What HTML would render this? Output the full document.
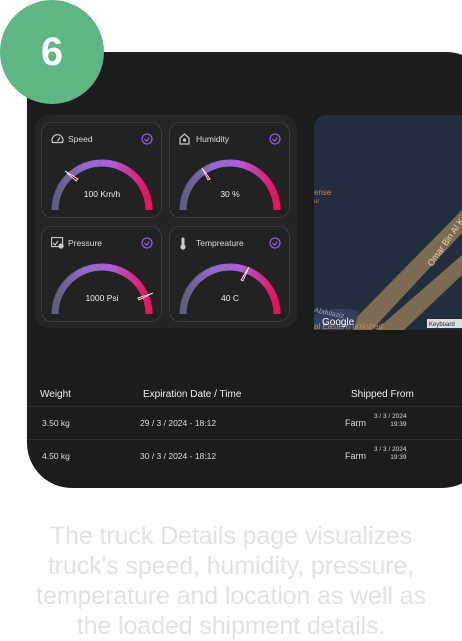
<!DOCTYPE html>
<html><head><style>
*{margin:0;padding:0;box-sizing:border-box}
body{width:462px;height:641px;background:#fff;position:relative;overflow:hidden;font-family:"Liberation Sans",sans-serif}
.panel{position:absolute;left:27px;top:52px;width:460px;height:436px;background:#1c1c1c;border-radius:0 40px 45px 45px}
.circle{position:absolute;left:0;top:0;width:104px;height:104px;border-radius:50%;background:#5db683;color:#fafafa;font-size:40px;font-weight:bold;text-align:center;line-height:104px}
.gp{position:absolute;left:35px;top:115px;width:262px;height:213px;background:#252525;border-radius:14px}
.card{position:absolute;width:121px;height:96px;border:1px solid #3c3c3c;border-radius:11px;background:#222}
.card .t{position:absolute;left:26px;top:11px;font-size:8.5px;color:#ddd}
.card .ic{position:absolute;left:9px;top:10px}
.card .ck{position:absolute;right:8px;top:10px}
.card svg.g{position:absolute;left:0;top:0}
.map{position:absolute;left:314px;top:115px;width:148px;height:215px;background:#222d3d;border-radius:12px 0 0 0;overflow:hidden}
.th{position:absolute;top:389px;font-size:10px;color:#eee}
.td{position:absolute;font-size:8.5px;color:#ddd}
.line{position:absolute;left:27px;width:435px;height:1px;background:#2c2c2c}
.cap{position:absolute;left:-20px;top:521px;width:502px;text-align:center;color:#e2e2e2;font-size:25px;line-height:30px;letter-spacing:-0.1px}
</style></head><body>
<div class="panel"></div>
<div class="circle">6</div>
<div class="gp"></div>
<svg width="0" height="0" style="position:absolute"><defs><linearGradient id="gr" x1="0" y1="0" x2="1" y2="0"><stop offset="0" stop-color="#5e5e80"/><stop offset="0.3" stop-color="#8d6acb"/><stop offset="0.6" stop-color="#ab5ed8"/><stop offset="1" stop-color="#ec0f5c"/></linearGradient></defs></svg>

<div class="card" style="left:41px;top:122px"><svg class="ic" width="13" height="11" viewBox="0 0 13 11"><path d="M1.5 9.5A5.5 5.5 0 1 1 11.5 9.5Z" fill="none" stroke="#ccc" stroke-width="1.2"/><path d="M6.5 8L9 4.5" stroke="#ccc" stroke-width="1.2"/></svg><div class="t">Speed</div><svg class="ck" width="12" height="12"><circle cx="6" cy="6" r="5" fill="none" stroke="#8b5cf6" stroke-width="1.3"/><path d="M3.5 6l2 2 3-3.5" fill="none" stroke="#8b5cf6" stroke-width="1.3"/></svg>
<svg class="g" width="121" height="96"><path d="M13 87A47 47 0 0 1 107 87" fill="none" stroke="url(#gr)" stroke-width="7"/><path d="M23 48L36 56L34 58Z" fill="#e00" stroke="#fff" stroke-width="0.8"/><text x="60" y="74" font-size="8.5" fill="#eee" text-anchor="middle">100 Km/h</text></svg></div>

<div class="card" style="left:169px;top:122px"><svg class="ic" width="11" height="12" viewBox="0 0 11 12"><path d="M1 5L5.5 1L10 5V11H1Z" fill="none" stroke="#ccc" stroke-width="1.2"/><circle cx="5.5" cy="7" r="1.6" fill="#ccc"/></svg><div class="t">Humidity</div><svg class="ck" width="12" height="12"><circle cx="6" cy="6" r="5" fill="none" stroke="#8b5cf6" stroke-width="1.3"/><path d="M3.5 6l2 2 3-3.5" fill="none" stroke="#8b5cf6" stroke-width="1.3"/></svg>
<svg class="g" width="121" height="96"><path d="M13 87A47 47 0 0 1 107 87" fill="none" stroke="url(#gr)" stroke-width="7"/><path d="M32 45L40 56L38 57Z" fill="#e00" stroke="#fff" stroke-width="0.8"/><text x="60" y="74" font-size="8.5" fill="#eee" text-anchor="middle">30 %</text></svg></div>

<div class="card" style="left:41px;top:226px"><svg class="ic" width="13" height="12" viewBox="0 0 13 12"><rect x="0.6" y="0.6" width="11" height="9" fill="none" stroke="#ccc" stroke-width="1.1"/><path d="M2 6l2 2 3-4" fill="none" stroke="#ccc" stroke-width="1.1"/><circle cx="10" cy="9" r="2.6" fill="#ccc"/></svg><div class="t">Pressure</div><svg class="ck" width="12" height="12"><circle cx="6" cy="6" r="5" fill="none" stroke="#8b5cf6" stroke-width="1.3"/><path d="M3.5 6l2 2 3-3.5" fill="none" stroke="#8b5cf6" stroke-width="1.3"/></svg>
<svg class="g" width="121" height="96"><path d="M13 87A47 47 0 0 1 107 87" fill="none" stroke="url(#gr)" stroke-width="7"/><path d="M111 66L96 71L97 73Z" fill="#e00" stroke="#fff" stroke-width="0.8"/><text x="60" y="74" font-size="8.5" fill="#eee" text-anchor="middle">1000 Psi</text></svg></div>

<div class="card" style="left:169px;top:226px"><svg class="ic" width="8" height="13" viewBox="0 0 8 13"><rect x="2.5" y="0.5" width="3" height="8" rx="1.5" fill="#ccc"/><circle cx="4" cy="10" r="2.6" fill="#ccc"/></svg><div class="t">Tempreature</div><svg class="ck" width="12" height="12"><circle cx="6" cy="6" r="5" fill="none" stroke="#8b5cf6" stroke-width="1.3"/><path d="M3.5 6l2 2 3-3.5" fill="none" stroke="#8b5cf6" stroke-width="1.3"/></svg>
<svg class="g" width="121" height="96"><path d="M13 87A47 47 0 0 1 107 87" fill="none" stroke="url(#gr)" stroke-width="7"/><path d="M79 40L71 53L73 54Z" fill="#e00" stroke="#fff" stroke-width="0.8"/><text x="60" y="74" font-size="8.5" fill="#eee" text-anchor="middle">40 C</text></svg></div>

<div class="map"><svg width="148" height="215"><path d="M30 215L148 95L148 118L58 215Z" fill="#7d6c52"/><path d="M62 215L148 140L148 160L90 215Z" fill="#7d6c52"/><path d="M0 200Q20 190 45 196L40 215L0 215Z" fill="#33405a"/><text x="0" y="80" font-size="8" fill="#c58a5a">ense</text><text x="0" y="88" font-size="6" fill="#c58a5a">ul</text><text x="0" y="197" font-size="7" fill="#9ab" transform="rotate(12 0 197)">Abdulaziz</text><text x="0" y="214" font-size="8" fill="#c58a5a">al Eastern urnished</text><text x="8" y="210" font-size="10" fill="#fff">Google</text><text transform="translate(118 152) rotate(-55)" font-size="9" fill="#e8d8a8" x="0" y="0">Omar Bin Al K</text><rect x="113" y="204" width="35" height="9" fill="#ddd"/><text x="115" y="211" font-size="6" fill="#222">Keyboard</text></svg></div>

<div class="th" style="left:40px">Weight</div>
<div class="th" style="left:143px">Expiration Date / Time</div>
<div class="th" style="left:351px">Shipped From</div>
<div class="line" style="top:406px"></div>
<div class="line" style="top:439px"></div>
<div class="td" style="left:42px;top:418px">3.50 kg</div>
<div class="td" style="left:140px;top:418px">29 / 3 / 2024 - 18:12</div>
<div class="td" style="left:345px;top:418px;font-size:9px">Farm</div>
<div class="td" style="left:374px;top:413px;font-size:6.5px;text-align:right;line-height:8px">3 / 3 / 2024<br>19:39</div>
<div class="td" style="left:42px;top:451px">4.50 kg</div>
<div class="td" style="left:140px;top:451px">30 / 3 / 2024 - 18:12</div>
<div class="td" style="left:345px;top:451px;font-size:9px">Farm</div>
<div class="td" style="left:374px;top:446px;font-size:6.5px;text-align:right;line-height:8px">3 / 3 / 2024<br>19:39</div>

<div class="cap">The truck Details page visualizes<br>truck's speed, humidity, pressure,<br>temperature and location as well as<br>the loaded shipment details.</div>
</body></html>
